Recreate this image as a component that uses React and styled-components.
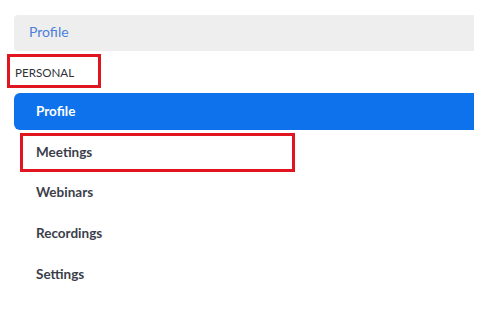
import React from "react";
import styled, { createGlobalStyle, css } from "styled-components";

const Global = createGlobalStyle`
  html, body { margin: 0; padding: 0; background: #ffffff; }
  body { font-family: Lato, "Open Sans", "Liberation Sans", sans-serif; }
`;

const Sidebar = styled.nav`
  width: 460px;
  margin-left: 14px;
  padding-top: 15px;
  display: flex;
  flex-direction: column;
`;

const TopBar = styled.div`
  height: 36px;
  box-sizing: border-box;
  background: #eeeeee;
  border-radius: 4px 0 0 4px;
  display: flex;
  align-items: center;
  padding: 0 0 3px 15px;
  font-size: 14px;
  font-weight: 400;
  color: #4b7fd9;
`;

const annotation = css`
  position: relative;
  &::after {
    content: "";
    position: absolute;
    border: 3px solid #e0151f;
    pointer-events: none;
  }
`;

const SectionHeader = styled.div`
  height: 42px;
  display: flex;
  align-items: center;
  padding-left: 1px;
  font-size: 11.6px;
  color: #2f3136;
  ${annotation}
  &::after {
    left: -7px;
    top: 3px;
    width: 88px;
    height: 28px;
  }
`;

const NavItem = styled.div`
  height: ${(p) => (p.$active ? "37px" : "40.6px")};
  box-sizing: border-box;
  display: flex;
  align-items: center;
  padding-left: 22px;
  padding-bottom: ${(p) => (p.$active ? "2px" : "0")};
  font-size: 13.5px;
  font-weight: 700;
  color: ${(p) => (p.$active ? "#ffffff" : "#3b3e4a")};
  background: ${(p) => (p.$active ? "#0e72ed" : "transparent")};
  border-radius: ${(p) => (p.$active ? "6px 0 0 6px" : "0")};
  margin-bottom: ${(p) => (p.$active ? "1.5px" : "0")};
  ${(p) =>
    p.$marked &&
    css`
      ${annotation}
      &::after {
        left: 6px;
        top: 1px;
        width: 269px;
        height: 33px;
      }
    `}
`;

const items = [
  { label: "Profile", active: true },
  { label: "Meetings", marked: true },
  { label: "Webinars" },
  { label: "Recordings" },
  { label: "Settings" },
];

export default function App() {
  return (
    <>
      <Global />
      <Sidebar>
        <TopBar>Profile</TopBar>
        <SectionHeader>PERSONAL</SectionHeader>
        {items.map((it) => (
          <NavItem key={it.label} $active={it.active} $marked={it.marked}>
            {it.label}
          </NavItem>
        ))}
      </Sidebar>
    </>
  );
}
